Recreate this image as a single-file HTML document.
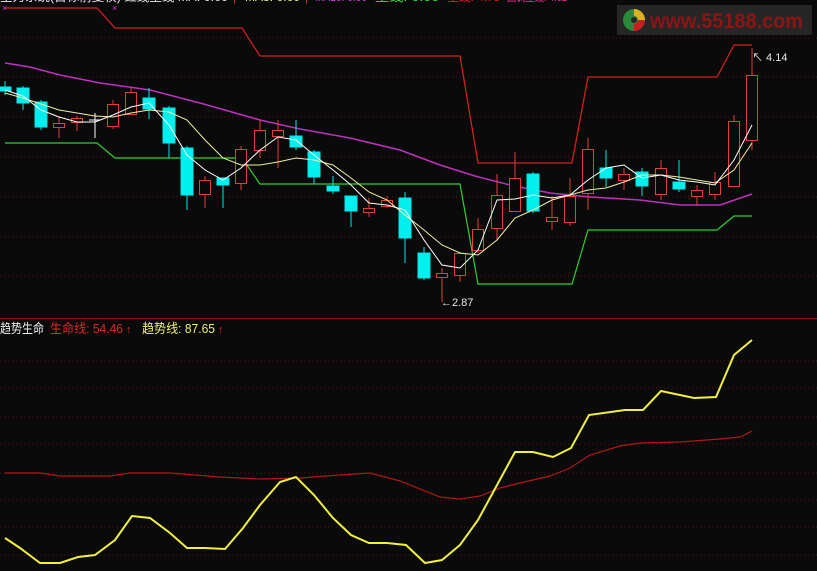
<!DOCTYPE html>
<html><head><meta charset="utf-8"><style>
html,body{margin:0;padding:0;background:#0a0a0a;width:817px;height:571px;overflow:hidden}
svg{display:block}
text{font-family:"Liberation Sans","Noto Sans CJK SC",sans-serif}
</style></head><body>
<svg width="817" height="571" viewBox="0 0 817 571" xmlns="http://www.w3.org/2000/svg">
<rect width="817" height="571" fill="#0a0a0a"/>
<!-- header text (cut off) -->
<text x="0" y="1" font-size="12" fill="#e8e8e8" textLength="228" lengthAdjust="spacingAndGlyphs">主力系统(目标前复权) 红线主线 MA: 0.00</text>
<text x="233" y="1" font-size="12" fill="#d03030">|</text>
<text x="245" y="1" font-size="12" fill="#f0f090" textLength="55" lengthAdjust="spacingAndGlyphs">MA5: 0.00</text>
<text x="305" y="1" font-size="12" fill="#d03030">|</text>
<text x="315" y="1" font-size="12" fill="#d040d0" textLength="52" lengthAdjust="spacingAndGlyphs">MA10: 0.00</text>
<text x="375" y="1" font-size="12" fill="#40e040" textLength="64" lengthAdjust="spacingAndGlyphs">主线: 0.00</text>
<text x="447" y="1" font-size="12" fill="#e02020" textLength="53" lengthAdjust="spacingAndGlyphs">主线: 4.75</text>
<text x="507" y="1" font-size="12" fill="#e03090" textLength="60" lengthAdjust="spacingAndGlyphs">回调主线: 4.62</text>
<g fill="#d040d0" font-size="9"><text x="2" y="11">×</text><text x="112" y="11">×</text><text x="640" y="11">×</text></g>
<!-- grid -->
<g stroke="#5a1414" stroke-width="1" stroke-dasharray="1,3">
<line x1="0" y1="38" x2="817" y2="38"/><line x1="0" y1="77" x2="817" y2="77"/><line x1="0" y1="117" x2="817" y2="117"/><line x1="0" y1="157" x2="817" y2="157"/><line x1="0" y1="197" x2="817" y2="197"/><line x1="0" y1="237" x2="817" y2="237"/><line x1="0" y1="276" x2="817" y2="276"/>
<line x1="0" y1="361" x2="817" y2="361"/><line x1="0" y1="388" x2="817" y2="388"/><line x1="0" y1="417" x2="817" y2="417"/><line x1="0" y1="444" x2="817" y2="444"/><line x1="0" y1="473" x2="817" y2="473"/><line x1="0" y1="500" x2="817" y2="500"/><line x1="0" y1="527" x2="817" y2="527"/><line x1="0" y1="555" x2="817" y2="555"/>
</g>
<line x1="0" y1="318.5" x2="817" y2="318.5" stroke="#8a1010" stroke-width="1"/>
<!-- logo -->
<rect x="617" y="5" width="195" height="30" fill="#262626"/>
<circle cx="634" cy="20" r="11" fill="#2a8a3a"/>
<path d="M634 9 A11 11 0 0 1 645 20 L638 20 A4 4 0 0 0 634 16Z" fill="#e0b020"/>
<path d="M645 20 A11 11 0 0 1 634 31 L634 24 A4 4 0 0 0 638 20Z" fill="#c02020"/>
<circle cx="634" cy="20" r="3" fill="#262626"/>
<text x="650" y="28" font-size="21" font-weight="bold" fill="#8e1414" textLength="153" lengthAdjust="spacingAndGlyphs">www.55188.com</text>
<!-- red line -->
<polyline fill="none" stroke="#d02020" stroke-width="1.3" points="5,8 97,8 115,28 242,28 260,56 460,56 478,163 572,163 588,77 717,77 734,45 752,45"/>
<polyline fill="none" stroke="#30d030" stroke-width="1.2" points="5,143 97,143 115,158 242,158 260,184 460,184 478,284 572,284 588,230 717,230 734,216 752,216"/>
<polyline fill="none" stroke="#c030c0" stroke-width="1.5" points="5,63 30,67 60,75 100,83 150,90 200,103 260,120 300,129 350,138 400,150 440,165 475,176 510,185 550,193 590,197 640,200 680,205 720,205 752,194"/>
<!-- candles -->
<g stroke-width="1">
<g stroke="#00e8e8" fill="#00f0f0">
<line x1="5" y1="81" x2="5" y2="95"/><rect x="0" y="87" width="11" height="4"/>
<line x1="23" y1="86" x2="23" y2="110"/><rect x="17" y="88" width="12" height="15"/>
<line x1="41" y1="100" x2="41" y2="130"/><rect x="35" y="102" width="12" height="25"/>
<line x1="149" y1="88" x2="149" y2="119"/><rect x="143" y="98" width="12" height="11"/>
<line x1="169" y1="106" x2="169" y2="158"/><rect x="163" y="108" width="12" height="35"/>
<line x1="187" y1="146" x2="187" y2="210"/><rect x="181" y="148" width="12" height="47"/>
<line x1="223" y1="178" x2="223" y2="208"/><rect x="217" y="178" width="12" height="7"/>
<line x1="296" y1="120" x2="296" y2="150"/><rect x="290" y="136" width="12" height="11"/>
<line x1="314" y1="150" x2="314" y2="184"/><rect x="308" y="152" width="12" height="25"/>
<line x1="333" y1="176" x2="333" y2="194"/><rect x="327" y="186" width="12" height="5"/>
<line x1="351" y1="196" x2="351" y2="227"/><rect x="345" y="196" width="12" height="15"/>
<line x1="405" y1="192" x2="405" y2="263"/><rect x="399" y="198" width="12" height="40"/>
<line x1="424" y1="247" x2="424" y2="280"/><rect x="418" y="253" width="12" height="25"/>
<line x1="533" y1="172" x2="533" y2="213"/><rect x="527" y="174" width="12" height="37"/>
<line x1="606" y1="150" x2="606" y2="187"/><rect x="600" y="168" width="12" height="10"/>
<line x1="642" y1="168" x2="642" y2="196"/><rect x="636" y="172" width="12" height="14"/>
<line x1="679" y1="160" x2="679" y2="192"/><rect x="673" y="182" width="12" height="7"/>
</g>
<g stroke="#e04038" fill="#0a0a0a">
<line x1="59" y1="117" x2="59" y2="138"/><rect x="53.5" y="123.5" width="11" height="4"/>
<line x1="77" y1="116" x2="77" y2="131"/><rect x="71.5" y="118.5" width="11" height="4"/>
<line x1="113" y1="100" x2="113" y2="129"/><rect x="107.5" y="104.5" width="11" height="22"/>
<line x1="131" y1="88" x2="131" y2="115"/><rect x="125.5" y="92.5" width="11" height="22"/>
<line x1="205" y1="176" x2="205" y2="208"/><rect x="199.5" y="180.5" width="11" height="14"/>
<line x1="241" y1="146" x2="241" y2="190"/><rect x="235.5" y="149.5" width="11" height="34"/>
<line x1="260" y1="120" x2="260" y2="158"/><rect x="254.5" y="130.5" width="11" height="20"/>
<line x1="278" y1="120" x2="278" y2="168"/><rect x="272.5" y="130.5" width="11" height="6"/>
<line x1="369" y1="198" x2="369" y2="217"/><rect x="363.5" y="208.5" width="11" height="4"/>
<line x1="387" y1="196" x2="387" y2="208"/><rect x="381.5" y="200.5" width="11" height="6"/>
<line x1="442" y1="268" x2="442" y2="302"/><rect x="436.5" y="273.5" width="11" height="4"/>
<line x1="460" y1="252" x2="460" y2="282"/><rect x="454.5" y="253.5" width="11" height="22"/>
<line x1="478" y1="218" x2="478" y2="253"/><rect x="472.5" y="229.5" width="11" height="21"/>
<line x1="497" y1="174" x2="497" y2="240"/><rect x="491.5" y="195.5" width="11" height="33"/>
<line x1="515" y1="152" x2="515" y2="212"/><rect x="509.5" y="178.5" width="11" height="33"/>
<line x1="552" y1="196" x2="552" y2="230"/><rect x="546.5" y="217.5" width="11" height="4"/>
<line x1="570" y1="178" x2="570" y2="226"/><rect x="564.5" y="196.5" width="11" height="26"/>
<line x1="588" y1="138" x2="588" y2="210"/><rect x="582.5" y="149.5" width="11" height="44"/>
<line x1="624" y1="168" x2="624" y2="190"/><rect x="618.5" y="174.5" width="11" height="6"/>
<line x1="661" y1="160" x2="661" y2="200"/><rect x="655.5" y="168.5" width="11" height="26"/>
<line x1="697" y1="185" x2="697" y2="205"/><rect x="691.5" y="190.5" width="11" height="6"/>
<line x1="715" y1="172" x2="715" y2="200"/><rect x="709.5" y="182.5" width="11" height="12"/>
<line x1="734" y1="115" x2="734" y2="186"/><rect x="728.5" y="121.5" width="11" height="65"/>
<line x1="752" y1="48" x2="752" y2="150"/><rect x="746.5" y="75.5" width="11" height="65"/>
</g>
<line x1="95" y1="113" x2="95" y2="138" stroke="#fff"/><line x1="89" y1="120" x2="101" y2="120" stroke="#fff"/>
</g>
<polyline fill="none" stroke="#f0f0a0" stroke-width="1" points="5,93 23,98 41,104 59,110 77,113 95,116 113,117 131,113 149,110 169,112 187,120 205,140 223,158 241,165 260,165 278,162 296,158 314,160 333,165 351,178 369,192 387,200 405,215 424,230 442,245 460,253 478,255 497,240 515,218 533,210 552,200 570,195 588,190 606,188 624,182 642,175 661,175 679,177 697,180 715,183 734,170 752,143"/>
<polyline fill="none" stroke="#ffffff" stroke-width="1" points="5,90 23,96 41,110 59,117 77,122 95,122 113,115 131,107 149,103 169,125 187,155 205,170 223,180 241,168 260,150 278,137 296,140 314,155 333,170 351,185 369,203 387,205 405,210 424,240 442,265 460,268 478,250 497,200 515,199 533,195 552,198 570,195 588,180 606,168 624,165 642,178 661,175 679,180 697,182 715,185 734,160 752,125"/>
<text x="441" y="306" font-size="11" fill="#e8e8e8">←2.87</text>
<text x="752" y="61" font-size="11" fill="#e8e8e8">↖ 4.14</text>
<!-- lower panel -->
<text x="0" y="333" font-size="13" fill="#f0f0f0" textLength="44" lengthAdjust="spacingAndGlyphs">趋势生命</text>
<text x="50" y="333" font-size="13" fill="#e02828" textLength="73" lengthAdjust="spacingAndGlyphs">生命线: 54.46</text>
<text x="126" y="333" font-size="11" fill="#e02828">↑</text>
<text x="142" y="333" font-size="13" fill="#f0f070" textLength="73" lengthAdjust="spacingAndGlyphs">趋势线: 87.65</text>
<text x="218" y="333" font-size="11" fill="#e02828">↑</text>
<polyline fill="none" stroke="#b01818" stroke-width="1.2" points="5,473 40,473 60,476 110,476 130,473 170,473 220,477 260,479 300,478 340,475 370,473 400,481 440,497 460,499 480,496 500,488 520,483 550,476 570,468 590,455 620,446 640,443 680,442 720,439 740,437 752,431"/>
<polyline fill="none" stroke="#f0f040" stroke-width="2" points="5,538 20,548 40,563 60,563 78,557 95,555 115,540 132,516 150,518 170,533 187,548 205,548 225,549 243,528 260,505 280,482 296,477 314,495 333,518 351,535 369,543 387,543 406,545 425,563 442,560 460,545 478,520 515,452 533,452 553,457 571,448 589,415 625,410 643,410 661,391 694,398 716,397 734,355 752,340"/>
</svg>
</body></html>
